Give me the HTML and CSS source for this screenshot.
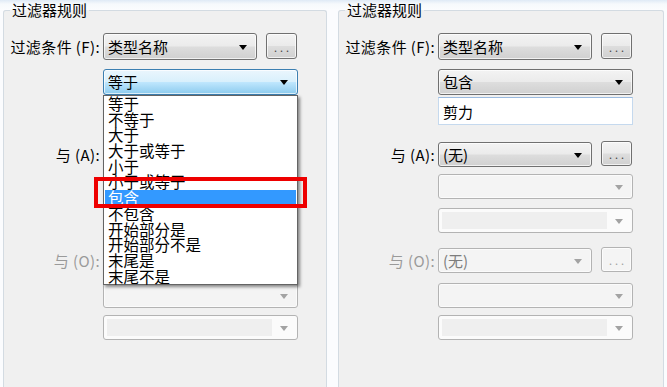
FILE: index.html
```html
<!DOCTYPE html>
<html lang="zh-CN">
<head>
<meta charset="utf-8">
<title>过滤器规则</title>
<link rel="stylesheet" href="styles.css">
</head>
<body>
<div class="stage">
  <fieldset class="panel panel-left">
    <legend>过滤器规则</legend>
    <div class="row r1"><span class="lbl">过滤条件 (F):</span><div class="combo short"><span class="val">类型名称</span><i class="arrow"></i></div><div class="btn">...</div></div>
    <div class="row r2"><div class="combo full focus"><span class="val">等于</span><i class="arrow"></i></div></div>
    <div class="row r3"><div class="textbox full"></div></div>
    <div class="row r4"><span class="lbl">与 (A):</span><div class="combo short"><i class="arrow"></i></div><div class="btn"></div></div>
    <div class="row r5"><div class="combo full disabled"><i class="arrow"></i></div></div>
    <div class="row r6"><div class="combo full disabled edit"><span class="field"></span><i class="arrow"></i></div></div>
    <div class="row r7"><span class="lbl dim">与 (O):</span><div class="combo short disabled"><i class="arrow"></i></div><div class="btn disabled"></div></div>
    <div class="row r8"><div class="combo full disabled"><i class="arrow"></i></div></div>
    <div class="row r9"><div class="combo full disabled edit"><span class="field"></span><i class="arrow"></i></div></div>
  </fieldset>
  <fieldset class="panel panel-right">
    <legend>过滤器规则</legend>
    <div class="row r1"><span class="lbl">过滤条件 (F):</span><div class="combo short"><span class="val">类型名称</span><i class="arrow"></i></div><div class="btn">...</div></div>
    <div class="row r2"><div class="combo full"><span class="val">包含</span><i class="arrow"></i></div></div>
    <div class="row r3"><div class="textbox full"><span class="val">剪力</span></div></div>
    <div class="row r4"><span class="lbl">与 (A):</span><div class="combo short"><span class="val">(无)</span><i class="arrow"></i></div><div class="btn">...</div></div>
    <div class="row r5"><div class="combo full disabled"><i class="arrow"></i></div></div>
    <div class="row r6"><div class="combo full disabled edit"><span class="field"></span><i class="arrow"></i></div></div>
    <div class="row r7"><span class="lbl dim">与 (O):</span><div class="combo short disabled"><span class="val">(无)</span><i class="arrow"></i></div><div class="btn disabled">...</div></div>
    <div class="row r8"><div class="combo full disabled"><i class="arrow"></i></div></div>
    <div class="row r9"><div class="combo full disabled edit"><span class="field"></span><i class="arrow"></i></div></div>
  </fieldset>

  <ul class="dropdown">
    <li>等于</li>
    <li>不等于</li>
    <li>大于</li>
    <li>大于或等于</li>
    <li>小于</li>
    <li>小于或等于</li>
    <li class="sel">包含</li>
    <li>不包含</li>
    <li>开始部分是</li>
    <li>开始部分不是</li>
    <li>末尾是</li>
    <li>末尾不是</li>
  </ul>
  <div class="redbox"></div>
</div>
</body>
</html>
```
FILE: styles.css
```css
* { box-sizing: border-box; }

html, body {
  margin: 0;
  padding: 0;
  width: 667px;
  height: 387px;
  overflow: hidden;
}

body {
  background: linear-gradient(to bottom, #dfeaf6 0, #f6f9fc 4px, #fbfcfe 10px);
  font-family: "Noto Sans CJK SC", "Noto Sans", sans-serif;
  font-size: 15px;
  color: #000;
}

.stage {
  position: relative;
  display: flex;
  align-items: flex-start;
  width: 667px;
  height: 387px;
}

.panel {
  margin: 1px 0 0 0;
  padding: 0;
  border: 1px solid #d3dbe2;
  border-bottom-width: 0;
  border-radius: 3px 3px 0 0;
  background: #f0f0f0;
  height: 386px;
  min-width: 0;
}

.panel-left { margin-left: 3px; width: 324px; }
.panel-right { margin-left: 11px; width: 326px; }

.panel legend {
  margin-left: 6px;
  padding: 0 2px;
  font-size: 15px;
  line-height: 18px;
}

.row {
  display: flex;
  align-items: center;
}
.r1 { margin-top: 14px; height: 27px; }
.r2 { margin-top: 9px; height: 26px; }
.r3 { margin-top: 2px; height: 28px; }
.r4 { margin-top: 17px; height: 25px; }
.r5 { margin-top: 7px; height: 25px; }
.r6 { margin-top: 9px; height: 25px; }
.r7 { margin-top: 15px; height: 25px; }
.r8 { margin-top: 10px; height: 25px; }
.r9 { margin-top: 7px; height: 25px; }

.lbl {
  width: 99px;
  padding-right: 3px;
  text-align: right;
  white-space: nowrap;
  font-size: 15px;
  letter-spacing: 0.4px;
}
.lbl.dim { color: #9a9a9a; }

.row > .full { margin-left: 99px; width: 195px; }

.combo {
  position: relative;
  height: 100%;
  display: flex;
  align-items: center;
  padding-left: 4px;
  border: 1px solid #707070;
  border-radius: 3px;
  background: linear-gradient(to bottom, #f3f3f3 0%, #ebebeb 48%, #dddddd 52%, #d0d0d0 100%);
  box-shadow: inset 0 0 0 1px rgba(255,255,255,0.7);
}
.combo.short { width: 154px; }
.combo .val { font-size: 15px; line-height: 18px; white-space: nowrap; }

.combo .arrow {
  position: absolute;
  right: 9px;
  top: 50%;
  margin-top: -2px;
  width: 0;
  height: 0;
  border-left: 4px solid transparent;
  border-right: 4px solid transparent;
  border-top: 5px solid #000;
}

.combo.focus {
  border-color: #3c7fb1;
  background: linear-gradient(to bottom, #eaf6fd 0%, #d9f0fc 48%, #bee6fd 52%, #8ccbee 100%);
}

.combo.disabled {
  border-color: #b3b3b3;
  background: #f4f4f4;
  box-shadow: inset 0 0 0 1px #fbfbfb;
}
.combo.disabled .val { color: #7d7d7d; }
.combo.disabled .arrow { border-top-color: #a3a3a3; }

.combo.edit { background: #fbfbfb; }
.combo.edit .field {
  position: absolute;
  left: 3px;
  top: 3px;
  bottom: 3px;
  right: 25px;
  background: #efefef;
}

.btn {
  margin-left: 9px;
  align-self: flex-start;
  width: 31px;
  height: 26px;
  border: 1px solid #707070;
  border-radius: 3px;
  background: linear-gradient(to bottom, #f3f3f3 0%, #ebebeb 48%, #dddddd 52%, #d0d0d0 100%);
  box-shadow: inset 0 0 0 1px rgba(255,255,255,0.7);
  font-size: 11px;
  letter-spacing: 3px;
  text-indent: 3px;
  text-align: center;
  line-height: 26px;
  color: #444;
}
.r4 .btn, .r7 .btn { height: 25px; line-height: 24px; margin-top: -1px; }
.btn.disabled {
  border-color: #b3b3b3;
  background: #f4f4f4;
  color: #a0a0a0;
}

.textbox {
  height: 100%;
  display: flex;
  align-items: center;
  padding-left: 4px;
  background: #fff;
  border: 1px solid #c5d9ee;
  border-top-color: #9bbbe0;
}
.textbox .val { font-size: 15px; }

.dropdown {
  position: absolute;
  left: 103px;
  top: 95px;
  width: 195px;
  height: 190px;
  margin: 0;
  padding: 0 1px;
  list-style: none;
  background: #fff;
  border: 1px solid #646464;
  box-shadow: 2px 2px 3px rgba(0,0,0,0.45);
}
.dropdown li {
  height: 15.7px;
  line-height: 15.7px;
  padding-left: 3px;
  font-size: 15.5px;
  white-space: nowrap;
}
.dropdown li.sel {
  background: #3399ff;
  color: #fff;
}

.redbox {
  position: absolute;
  left: 94px;
  top: 177px;
  width: 213px;
  height: 31px;
  border: 4px solid #ee0000;
}
```
